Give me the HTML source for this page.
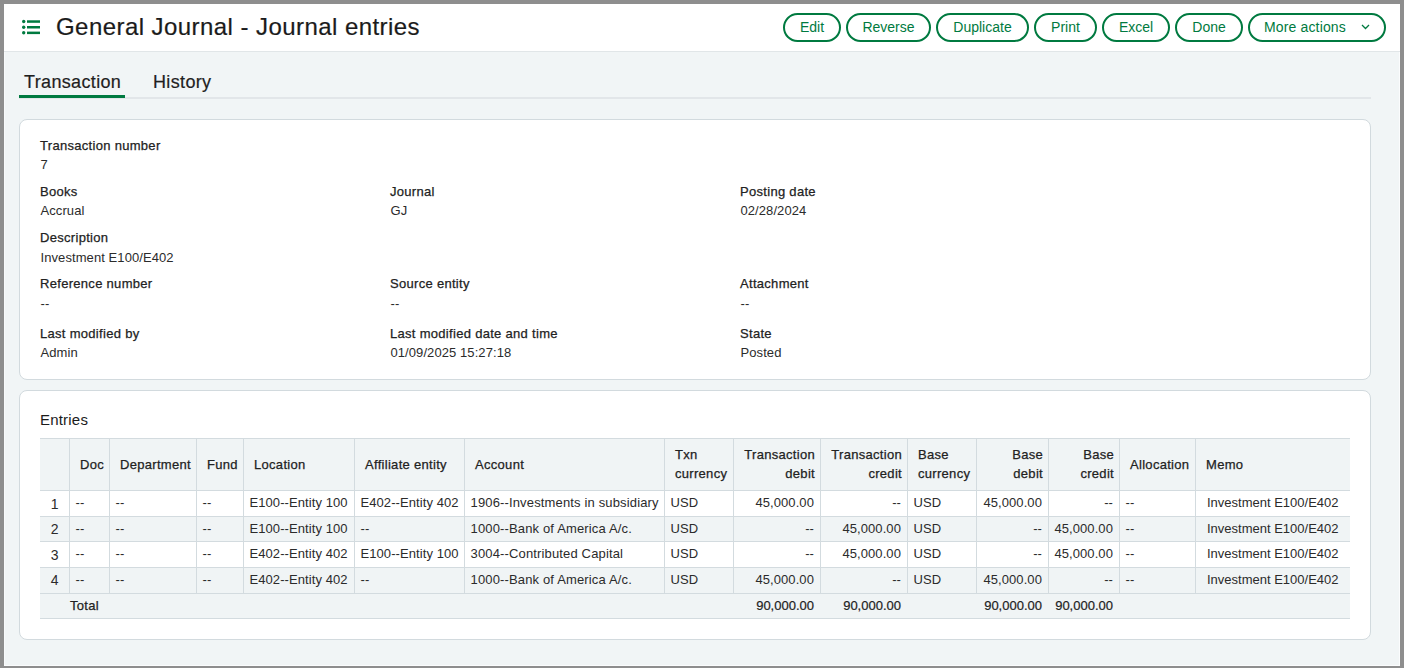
<!DOCTYPE html>
<html><head><meta charset="utf-8"><style>
html,body{margin:0;padding:0;}
body{width:1404px;height:668px;position:relative;overflow:hidden;background:#8e8e8e;font-family:"Liberation Sans", sans-serif;}
</style></head><body>
<div style="position:absolute;left:4px;top:4px;width:1396px;height:662px;background:#f1f5f6;"></div>
<div style="position:absolute;left:4px;top:4px;width:1396px;height:47px;background:#fff;"></div>
<div style="position:absolute;left:4px;top:52px;width:1px;height:614px;background:#f8fafb;"></div>
<div style="position:absolute;left:1399px;top:52px;width:1px;height:614px;background:#fbfcfd;"></div>
<div style="position:absolute;left:4px;top:665px;width:1396px;height:1px;background:#fbfcfd;"></div>
<div style="position:absolute;left:4px;top:51px;width:1396px;height:1px;background:#e1e6e8;"></div>
<svg style="position:absolute;left:20px;top:18px" width="22" height="18" viewBox="0 0 22 18">
<circle cx="3.7" cy="3.5" r="1.7" fill="#007a40"/><circle cx="3.7" cy="9.2" r="1.7" fill="#007a40"/><circle cx="3.7" cy="14.8" r="1.7" fill="#007a40"/>
<rect x="7" y="2.3" width="13" height="2.5" fill="#007a40"/><rect x="7" y="8" width="13" height="2.5" fill="#007a40"/><rect x="7" y="13.6" width="13" height="2.5" fill="#007a40"/>
</svg>
<div style="position:absolute;top:15px;font-size:24px;line-height:24px;color:#1b1b1b;white-space:nowrap;left:56px;letter-spacing:0.44px;-webkit-text-stroke:0.2px #1b1b1b;">General Journal - Journal entries</div>
<div style="position:absolute;left:783px;top:13px;width:58px;height:29px;box-sizing:border-box;border:2px solid #007a40;border-radius:15px;"></div>
<div style="position:absolute;left:783px;top:20px;width:58px;text-align:center;font-size:14px;line-height:14px;color:#007a40;">Edit</div>
<div style="position:absolute;left:846px;top:13px;width:85px;height:29px;box-sizing:border-box;border:2px solid #007a40;border-radius:15px;"></div>
<div style="position:absolute;left:846px;top:20px;width:85px;text-align:center;font-size:14px;line-height:14px;color:#007a40;">Reverse</div>
<div style="position:absolute;left:936px;top:13px;width:93px;height:29px;box-sizing:border-box;border:2px solid #007a40;border-radius:15px;"></div>
<div style="position:absolute;left:936px;top:20px;width:93px;text-align:center;font-size:14px;line-height:14px;color:#007a40;">Duplicate</div>
<div style="position:absolute;left:1034px;top:13px;width:63px;height:29px;box-sizing:border-box;border:2px solid #007a40;border-radius:15px;"></div>
<div style="position:absolute;left:1034px;top:20px;width:63px;text-align:center;font-size:14px;line-height:14px;color:#007a40;">Print</div>
<div style="position:absolute;left:1102px;top:13px;width:68px;height:29px;box-sizing:border-box;border:2px solid #007a40;border-radius:15px;"></div>
<div style="position:absolute;left:1102px;top:20px;width:68px;text-align:center;font-size:14px;line-height:14px;color:#007a40;">Excel</div>
<div style="position:absolute;left:1175px;top:13px;width:68px;height:29px;box-sizing:border-box;border:2px solid #007a40;border-radius:15px;"></div>
<div style="position:absolute;left:1175px;top:20px;width:68px;text-align:center;font-size:14px;line-height:14px;color:#007a40;">Done</div>
<div style="position:absolute;left:1248px;top:13px;width:138px;height:29px;box-sizing:border-box;border:2px solid #007a40;border-radius:15px;"></div>
<div style="position:absolute;top:20px;font-size:14px;line-height:14px;color:#007a40;white-space:nowrap;left:1264px;letter-spacing:0.15px;">More actions</div>
<svg style="position:absolute;left:1361px;top:24px" width="9" height="6" viewBox="0 0 9 6"><path d="M1 1 L4.5 4.5 L8 1" fill="none" stroke="#007a40" stroke-width="1.3"/></svg>
<div style="position:absolute;left:19px;top:97px;width:1352px;height:2px;background:#e2e6e9;"></div>
<div style="position:absolute;left:19px;top:95px;width:106px;height:3px;background:#007a40;"></div>
<div style="position:absolute;top:73px;font-size:18px;line-height:18px;color:#1f1f1f;white-space:nowrap;left:24px;letter-spacing:0.35px;-webkit-text-stroke:0.2px #1f1f1f;">Transaction</div>
<div style="position:absolute;top:73px;font-size:18px;line-height:18px;color:#1f1f1f;white-space:nowrap;left:153px;letter-spacing:0.35px;-webkit-text-stroke:0.2px #1f1f1f;">History</div>
<div style="position:absolute;left:19px;top:119px;width:1352px;height:261px;background:#fff;border:1px solid #d2dade;border-radius:8px;box-sizing:border-box;"></div>
<div style="position:absolute;top:139px;font-size:13px;line-height:13px;color:#222222;white-space:nowrap;left:40px;letter-spacing:0.3px;-webkit-text-stroke:0.25px #222222;">Transaction number</div>
<div style="position:absolute;top:158px;font-size:13px;line-height:13px;color:#2b2b2b;white-space:nowrap;left:40.5px;letter-spacing:0.08px;">7</div>
<div style="position:absolute;top:185px;font-size:13px;line-height:13px;color:#222222;white-space:nowrap;left:40px;letter-spacing:0.3px;-webkit-text-stroke:0.25px #222222;">Books</div>
<div style="position:absolute;top:204px;font-size:13px;line-height:13px;color:#2b2b2b;white-space:nowrap;left:40.5px;letter-spacing:0.08px;">Accrual</div>
<div style="position:absolute;top:185px;font-size:13px;line-height:13px;color:#222222;white-space:nowrap;left:390px;letter-spacing:0.3px;-webkit-text-stroke:0.25px #222222;">Journal</div>
<div style="position:absolute;top:204px;font-size:13px;line-height:13px;color:#2b2b2b;white-space:nowrap;left:390.5px;letter-spacing:0.08px;">GJ</div>
<div style="position:absolute;top:185px;font-size:13px;line-height:13px;color:#222222;white-space:nowrap;left:740px;letter-spacing:0.3px;-webkit-text-stroke:0.25px #222222;">Posting date</div>
<div style="position:absolute;top:204px;font-size:13px;line-height:13px;color:#2b2b2b;white-space:nowrap;left:740.5px;letter-spacing:0.08px;">02/28/2024</div>
<div style="position:absolute;top:231px;font-size:13px;line-height:13px;color:#222222;white-space:nowrap;left:40px;letter-spacing:0.3px;-webkit-text-stroke:0.25px #222222;">Description</div>
<div style="position:absolute;top:251px;font-size:13px;line-height:13px;color:#2b2b2b;white-space:nowrap;left:40.5px;letter-spacing:0.08px;">Investment E100/E402</div>
<div style="position:absolute;top:277px;font-size:13px;line-height:13px;color:#222222;white-space:nowrap;left:40px;letter-spacing:0.3px;-webkit-text-stroke:0.25px #222222;">Reference number</div>
<div style="position:absolute;top:297px;font-size:13px;line-height:13px;color:#2b2b2b;white-space:nowrap;left:40.5px;letter-spacing:0.08px;">--</div>
<div style="position:absolute;top:277px;font-size:13px;line-height:13px;color:#222222;white-space:nowrap;left:390px;letter-spacing:0.3px;-webkit-text-stroke:0.25px #222222;">Source entity</div>
<div style="position:absolute;top:297px;font-size:13px;line-height:13px;color:#2b2b2b;white-space:nowrap;left:390.5px;letter-spacing:0.08px;">--</div>
<div style="position:absolute;top:277px;font-size:13px;line-height:13px;color:#222222;white-space:nowrap;left:740px;letter-spacing:0.3px;-webkit-text-stroke:0.25px #222222;">Attachment</div>
<div style="position:absolute;top:297px;font-size:13px;line-height:13px;color:#2b2b2b;white-space:nowrap;left:740.5px;letter-spacing:0.08px;">--</div>
<div style="position:absolute;top:327px;font-size:13px;line-height:13px;color:#222222;white-space:nowrap;left:40px;letter-spacing:0.3px;-webkit-text-stroke:0.25px #222222;">Last modified by</div>
<div style="position:absolute;top:346px;font-size:13px;line-height:13px;color:#2b2b2b;white-space:nowrap;left:40.5px;letter-spacing:0.08px;">Admin</div>
<div style="position:absolute;top:327px;font-size:13px;line-height:13px;color:#222222;white-space:nowrap;left:390px;letter-spacing:0.3px;-webkit-text-stroke:0.25px #222222;">Last modified date and time</div>
<div style="position:absolute;top:346px;font-size:13px;line-height:13px;color:#2b2b2b;white-space:nowrap;left:390.5px;letter-spacing:0.08px;">01/09/2025 15:27:18</div>
<div style="position:absolute;top:327px;font-size:13px;line-height:13px;color:#222222;white-space:nowrap;left:740px;letter-spacing:0.3px;-webkit-text-stroke:0.25px #222222;">State</div>
<div style="position:absolute;top:346px;font-size:13px;line-height:13px;color:#2b2b2b;white-space:nowrap;left:740.5px;letter-spacing:0.08px;">Posted</div>
<div style="position:absolute;left:19px;top:390px;width:1352px;height:250px;background:#fff;border:1px solid #d2dade;border-radius:8px;box-sizing:border-box;"></div>
<div style="position:absolute;top:412px;font-size:15px;line-height:15px;color:#1b1b1b;white-space:nowrap;left:40px;letter-spacing:0.2px;">Entries</div>
<div style="position:absolute;left:40px;top:439px;width:1310px;height:51px;background:#f0f4f5;"></div>
<div style="position:absolute;left:40px;top:517px;width:1310px;height:24px;background:#f0f4f5;"></div>
<div style="position:absolute;left:40px;top:568px;width:1310px;height:25px;background:#f0f4f5;"></div>
<div style="position:absolute;left:40px;top:594px;width:1310px;height:24px;background:#f0f4f5;"></div>
<div style="position:absolute;left:40px;top:438px;width:1310px;height:1px;background:#d3dbdf;"></div>
<div style="position:absolute;left:40px;top:490px;width:1310px;height:1px;background:#d3dbdf;"></div>
<div style="position:absolute;left:40px;top:516px;width:1310px;height:1px;background:#d3dbdf;"></div>
<div style="position:absolute;left:40px;top:541px;width:1310px;height:1px;background:#d3dbdf;"></div>
<div style="position:absolute;left:40px;top:567px;width:1310px;height:1px;background:#d3dbdf;"></div>
<div style="position:absolute;left:40px;top:593px;width:1310px;height:1px;background:#d3dbdf;"></div>
<div style="position:absolute;left:40px;top:618px;width:1310px;height:1px;background:#d3dbdf;"></div>
<div style="position:absolute;left:69px;top:438px;width:1px;height:155px;background:#d3dbdf;"></div>
<div style="position:absolute;left:109px;top:438px;width:1px;height:155px;background:#d3dbdf;"></div>
<div style="position:absolute;left:196px;top:438px;width:1px;height:155px;background:#d3dbdf;"></div>
<div style="position:absolute;left:243px;top:438px;width:1px;height:155px;background:#d3dbdf;"></div>
<div style="position:absolute;left:354px;top:438px;width:1px;height:155px;background:#d3dbdf;"></div>
<div style="position:absolute;left:464px;top:438px;width:1px;height:155px;background:#d3dbdf;"></div>
<div style="position:absolute;left:664px;top:438px;width:1px;height:155px;background:#d3dbdf;"></div>
<div style="position:absolute;left:733px;top:438px;width:1px;height:155px;background:#d3dbdf;"></div>
<div style="position:absolute;left:820px;top:438px;width:1px;height:155px;background:#d3dbdf;"></div>
<div style="position:absolute;left:907px;top:438px;width:1px;height:155px;background:#d3dbdf;"></div>
<div style="position:absolute;left:976px;top:438px;width:1px;height:155px;background:#d3dbdf;"></div>
<div style="position:absolute;left:1048px;top:438px;width:1px;height:155px;background:#d3dbdf;"></div>
<div style="position:absolute;left:1119px;top:438px;width:1px;height:155px;background:#d3dbdf;"></div>
<div style="position:absolute;left:1195px;top:438px;width:1px;height:155px;background:#d3dbdf;"></div>
<div style="position:absolute;top:458px;font-size:13px;line-height:13px;color:#222222;white-space:nowrap;left:80px;letter-spacing:0.3px;-webkit-text-stroke:0.25px #222222;">Doc</div>
<div style="position:absolute;top:458px;font-size:13px;line-height:13px;color:#222222;white-space:nowrap;left:120px;letter-spacing:0.3px;-webkit-text-stroke:0.25px #222222;">Department</div>
<div style="position:absolute;top:458px;font-size:13px;line-height:13px;color:#222222;white-space:nowrap;left:207px;letter-spacing:0.3px;-webkit-text-stroke:0.25px #222222;">Fund</div>
<div style="position:absolute;top:458px;font-size:13px;line-height:13px;color:#222222;white-space:nowrap;left:254px;letter-spacing:0.3px;-webkit-text-stroke:0.25px #222222;">Location</div>
<div style="position:absolute;top:458px;font-size:13px;line-height:13px;color:#222222;white-space:nowrap;left:365px;letter-spacing:0.3px;-webkit-text-stroke:0.25px #222222;">Affiliate entity</div>
<div style="position:absolute;top:458px;font-size:13px;line-height:13px;color:#222222;white-space:nowrap;left:475px;letter-spacing:0.3px;-webkit-text-stroke:0.25px #222222;">Account</div>
<div style="position:absolute;top:448px;font-size:13px;line-height:13px;color:#222222;white-space:nowrap;left:675px;letter-spacing:0.3px;-webkit-text-stroke:0.25px #222222;">Txn</div>
<div style="position:absolute;top:467px;font-size:13px;line-height:13px;color:#222222;white-space:nowrap;left:675px;letter-spacing:0.3px;-webkit-text-stroke:0.25px #222222;">currency</div>
<div style="position:absolute;top:448px;font-size:13px;line-height:13px;color:#222222;white-space:nowrap;right:589px;letter-spacing:0.3px;-webkit-text-stroke:0.25px #222222;">Transaction</div>
<div style="position:absolute;top:467px;font-size:13px;line-height:13px;color:#222222;white-space:nowrap;right:589px;letter-spacing:0.3px;-webkit-text-stroke:0.25px #222222;">debit</div>
<div style="position:absolute;top:448px;font-size:13px;line-height:13px;color:#222222;white-space:nowrap;right:502px;letter-spacing:0.3px;-webkit-text-stroke:0.25px #222222;">Transaction</div>
<div style="position:absolute;top:467px;font-size:13px;line-height:13px;color:#222222;white-space:nowrap;right:502px;letter-spacing:0.3px;-webkit-text-stroke:0.25px #222222;">credit</div>
<div style="position:absolute;top:448px;font-size:13px;line-height:13px;color:#222222;white-space:nowrap;left:918px;letter-spacing:0.3px;-webkit-text-stroke:0.25px #222222;">Base</div>
<div style="position:absolute;top:467px;font-size:13px;line-height:13px;color:#222222;white-space:nowrap;left:918px;letter-spacing:0.3px;-webkit-text-stroke:0.25px #222222;">currency</div>
<div style="position:absolute;top:448px;font-size:13px;line-height:13px;color:#222222;white-space:nowrap;right:361px;letter-spacing:0.3px;-webkit-text-stroke:0.25px #222222;">Base</div>
<div style="position:absolute;top:467px;font-size:13px;line-height:13px;color:#222222;white-space:nowrap;right:361px;letter-spacing:0.3px;-webkit-text-stroke:0.25px #222222;">debit</div>
<div style="position:absolute;top:448px;font-size:13px;line-height:13px;color:#222222;white-space:nowrap;right:290px;letter-spacing:0.3px;-webkit-text-stroke:0.25px #222222;">Base</div>
<div style="position:absolute;top:467px;font-size:13px;line-height:13px;color:#222222;white-space:nowrap;right:290px;letter-spacing:0.3px;-webkit-text-stroke:0.25px #222222;">credit</div>
<div style="position:absolute;top:458px;font-size:13px;line-height:13px;color:#222222;white-space:nowrap;left:1130px;letter-spacing:0.3px;-webkit-text-stroke:0.25px #222222;">Allocation</div>
<div style="position:absolute;top:458px;font-size:13px;line-height:13px;color:#222222;white-space:nowrap;left:1206px;letter-spacing:0.3px;-webkit-text-stroke:0.25px #222222;">Memo</div>
<div style="position:absolute;top:497px;font-size:14px;line-height:14px;color:#2b2b2b;white-space:nowrap;right:1345.5px;">1</div>
<div style="position:absolute;top:496px;font-size:13px;line-height:13px;color:#2b2b2b;white-space:nowrap;left:75.5px;letter-spacing:0.08px;">--</div>
<div style="position:absolute;top:496px;font-size:13px;line-height:13px;color:#2b2b2b;white-space:nowrap;left:115.5px;letter-spacing:0.08px;">--</div>
<div style="position:absolute;top:496px;font-size:13px;line-height:13px;color:#2b2b2b;white-space:nowrap;left:202.5px;letter-spacing:0.08px;">--</div>
<div style="position:absolute;top:496px;font-size:13px;line-height:13px;color:#2b2b2b;white-space:nowrap;left:249.5px;letter-spacing:0.08px;">E100--Entity 100</div>
<div style="position:absolute;top:496px;font-size:13px;line-height:13px;color:#2b2b2b;white-space:nowrap;left:360.5px;letter-spacing:0.08px;">E402--Entity 402</div>
<div style="position:absolute;top:496px;font-size:13px;line-height:13px;color:#2b2b2b;white-space:nowrap;left:470.5px;letter-spacing:0.15px;">1906--Investments in subsidiary</div>
<div style="position:absolute;top:496px;font-size:13px;line-height:13px;color:#2b2b2b;white-space:nowrap;left:670.5px;letter-spacing:0.08px;">USD</div>
<div style="position:absolute;top:496px;font-size:13px;line-height:13px;color:#2b2b2b;white-space:nowrap;right:590px;letter-spacing:0.08px;">45,000.00</div>
<div style="position:absolute;top:496px;font-size:13px;line-height:13px;color:#2b2b2b;white-space:nowrap;right:503px;letter-spacing:0.08px;">--</div>
<div style="position:absolute;top:496px;font-size:13px;line-height:13px;color:#2b2b2b;white-space:nowrap;left:913.5px;letter-spacing:0.08px;">USD</div>
<div style="position:absolute;top:496px;font-size:13px;line-height:13px;color:#2b2b2b;white-space:nowrap;right:362px;letter-spacing:0.08px;">45,000.00</div>
<div style="position:absolute;top:496px;font-size:13px;line-height:13px;color:#2b2b2b;white-space:nowrap;right:291px;letter-spacing:0.08px;">--</div>
<div style="position:absolute;top:496px;font-size:13px;line-height:13px;color:#2b2b2b;white-space:nowrap;left:1125.5px;letter-spacing:0.08px;">--</div>
<div style="position:absolute;top:496px;font-size:13px;line-height:13px;color:#2b2b2b;white-space:nowrap;left:1207px;">Investment E100/E402</div>
<div style="position:absolute;top:522px;font-size:14px;line-height:14px;color:#2b2b2b;white-space:nowrap;right:1345.5px;">2</div>
<div style="position:absolute;top:522px;font-size:13px;line-height:13px;color:#2b2b2b;white-space:nowrap;left:75.5px;letter-spacing:0.08px;">--</div>
<div style="position:absolute;top:522px;font-size:13px;line-height:13px;color:#2b2b2b;white-space:nowrap;left:115.5px;letter-spacing:0.08px;">--</div>
<div style="position:absolute;top:522px;font-size:13px;line-height:13px;color:#2b2b2b;white-space:nowrap;left:202.5px;letter-spacing:0.08px;">--</div>
<div style="position:absolute;top:522px;font-size:13px;line-height:13px;color:#2b2b2b;white-space:nowrap;left:249.5px;letter-spacing:0.08px;">E100--Entity 100</div>
<div style="position:absolute;top:522px;font-size:13px;line-height:13px;color:#2b2b2b;white-space:nowrap;left:360.5px;letter-spacing:0.08px;">--</div>
<div style="position:absolute;top:522px;font-size:13px;line-height:13px;color:#2b2b2b;white-space:nowrap;left:470.5px;letter-spacing:0.15px;">1000--Bank of America A/c.</div>
<div style="position:absolute;top:522px;font-size:13px;line-height:13px;color:#2b2b2b;white-space:nowrap;left:670.5px;letter-spacing:0.08px;">USD</div>
<div style="position:absolute;top:522px;font-size:13px;line-height:13px;color:#2b2b2b;white-space:nowrap;right:590px;letter-spacing:0.08px;">--</div>
<div style="position:absolute;top:522px;font-size:13px;line-height:13px;color:#2b2b2b;white-space:nowrap;right:503px;letter-spacing:0.08px;">45,000.00</div>
<div style="position:absolute;top:522px;font-size:13px;line-height:13px;color:#2b2b2b;white-space:nowrap;left:913.5px;letter-spacing:0.08px;">USD</div>
<div style="position:absolute;top:522px;font-size:13px;line-height:13px;color:#2b2b2b;white-space:nowrap;right:362px;letter-spacing:0.08px;">--</div>
<div style="position:absolute;top:522px;font-size:13px;line-height:13px;color:#2b2b2b;white-space:nowrap;right:291px;letter-spacing:0.08px;">45,000.00</div>
<div style="position:absolute;top:522px;font-size:13px;line-height:13px;color:#2b2b2b;white-space:nowrap;left:1125.5px;letter-spacing:0.08px;">--</div>
<div style="position:absolute;top:522px;font-size:13px;line-height:13px;color:#2b2b2b;white-space:nowrap;left:1207px;">Investment E100/E402</div>
<div style="position:absolute;top:548px;font-size:14px;line-height:14px;color:#2b2b2b;white-space:nowrap;right:1345.5px;">3</div>
<div style="position:absolute;top:547px;font-size:13px;line-height:13px;color:#2b2b2b;white-space:nowrap;left:75.5px;letter-spacing:0.08px;">--</div>
<div style="position:absolute;top:547px;font-size:13px;line-height:13px;color:#2b2b2b;white-space:nowrap;left:115.5px;letter-spacing:0.08px;">--</div>
<div style="position:absolute;top:547px;font-size:13px;line-height:13px;color:#2b2b2b;white-space:nowrap;left:202.5px;letter-spacing:0.08px;">--</div>
<div style="position:absolute;top:547px;font-size:13px;line-height:13px;color:#2b2b2b;white-space:nowrap;left:249.5px;letter-spacing:0.08px;">E402--Entity 402</div>
<div style="position:absolute;top:547px;font-size:13px;line-height:13px;color:#2b2b2b;white-space:nowrap;left:360.5px;letter-spacing:0.08px;">E100--Entity 100</div>
<div style="position:absolute;top:547px;font-size:13px;line-height:13px;color:#2b2b2b;white-space:nowrap;left:470.5px;letter-spacing:0.15px;">3004--Contributed Capital</div>
<div style="position:absolute;top:547px;font-size:13px;line-height:13px;color:#2b2b2b;white-space:nowrap;left:670.5px;letter-spacing:0.08px;">USD</div>
<div style="position:absolute;top:547px;font-size:13px;line-height:13px;color:#2b2b2b;white-space:nowrap;right:590px;letter-spacing:0.08px;">--</div>
<div style="position:absolute;top:547px;font-size:13px;line-height:13px;color:#2b2b2b;white-space:nowrap;right:503px;letter-spacing:0.08px;">45,000.00</div>
<div style="position:absolute;top:547px;font-size:13px;line-height:13px;color:#2b2b2b;white-space:nowrap;left:913.5px;letter-spacing:0.08px;">USD</div>
<div style="position:absolute;top:547px;font-size:13px;line-height:13px;color:#2b2b2b;white-space:nowrap;right:362px;letter-spacing:0.08px;">--</div>
<div style="position:absolute;top:547px;font-size:13px;line-height:13px;color:#2b2b2b;white-space:nowrap;right:291px;letter-spacing:0.08px;">45,000.00</div>
<div style="position:absolute;top:547px;font-size:13px;line-height:13px;color:#2b2b2b;white-space:nowrap;left:1125.5px;letter-spacing:0.08px;">--</div>
<div style="position:absolute;top:547px;font-size:13px;line-height:13px;color:#2b2b2b;white-space:nowrap;left:1207px;">Investment E100/E402</div>
<div style="position:absolute;top:573px;font-size:14px;line-height:14px;color:#2b2b2b;white-space:nowrap;right:1345.5px;">4</div>
<div style="position:absolute;top:573px;font-size:13px;line-height:13px;color:#2b2b2b;white-space:nowrap;left:75.5px;letter-spacing:0.08px;">--</div>
<div style="position:absolute;top:573px;font-size:13px;line-height:13px;color:#2b2b2b;white-space:nowrap;left:115.5px;letter-spacing:0.08px;">--</div>
<div style="position:absolute;top:573px;font-size:13px;line-height:13px;color:#2b2b2b;white-space:nowrap;left:202.5px;letter-spacing:0.08px;">--</div>
<div style="position:absolute;top:573px;font-size:13px;line-height:13px;color:#2b2b2b;white-space:nowrap;left:249.5px;letter-spacing:0.08px;">E402--Entity 402</div>
<div style="position:absolute;top:573px;font-size:13px;line-height:13px;color:#2b2b2b;white-space:nowrap;left:360.5px;letter-spacing:0.08px;">--</div>
<div style="position:absolute;top:573px;font-size:13px;line-height:13px;color:#2b2b2b;white-space:nowrap;left:470.5px;letter-spacing:0.15px;">1000--Bank of America A/c.</div>
<div style="position:absolute;top:573px;font-size:13px;line-height:13px;color:#2b2b2b;white-space:nowrap;left:670.5px;letter-spacing:0.08px;">USD</div>
<div style="position:absolute;top:573px;font-size:13px;line-height:13px;color:#2b2b2b;white-space:nowrap;right:590px;letter-spacing:0.08px;">45,000.00</div>
<div style="position:absolute;top:573px;font-size:13px;line-height:13px;color:#2b2b2b;white-space:nowrap;right:503px;letter-spacing:0.08px;">--</div>
<div style="position:absolute;top:573px;font-size:13px;line-height:13px;color:#2b2b2b;white-space:nowrap;left:913.5px;letter-spacing:0.08px;">USD</div>
<div style="position:absolute;top:573px;font-size:13px;line-height:13px;color:#2b2b2b;white-space:nowrap;right:362px;letter-spacing:0.08px;">45,000.00</div>
<div style="position:absolute;top:573px;font-size:13px;line-height:13px;color:#2b2b2b;white-space:nowrap;right:291px;letter-spacing:0.08px;">--</div>
<div style="position:absolute;top:573px;font-size:13px;line-height:13px;color:#2b2b2b;white-space:nowrap;left:1125.5px;letter-spacing:0.08px;">--</div>
<div style="position:absolute;top:573px;font-size:13px;line-height:13px;color:#2b2b2b;white-space:nowrap;left:1207px;">Investment E100/E402</div>
<div style="position:absolute;top:599px;font-size:13px;line-height:13px;color:#222222;white-space:nowrap;left:70px;letter-spacing:0.3px;-webkit-text-stroke:0.25px #222222;">Total</div>
<div style="position:absolute;top:599px;font-size:13px;line-height:13px;color:#222222;white-space:nowrap;right:590px;-webkit-text-stroke:0.2px #222222;">90,000.00</div>
<div style="position:absolute;top:599px;font-size:13px;line-height:13px;color:#222222;white-space:nowrap;right:503px;-webkit-text-stroke:0.2px #222222;">90,000.00</div>
<div style="position:absolute;top:599px;font-size:13px;line-height:13px;color:#222222;white-space:nowrap;right:362px;-webkit-text-stroke:0.2px #222222;">90,000.00</div>
<div style="position:absolute;top:599px;font-size:13px;line-height:13px;color:#222222;white-space:nowrap;right:291px;-webkit-text-stroke:0.2px #222222;">90,000.00</div>
</body></html>
